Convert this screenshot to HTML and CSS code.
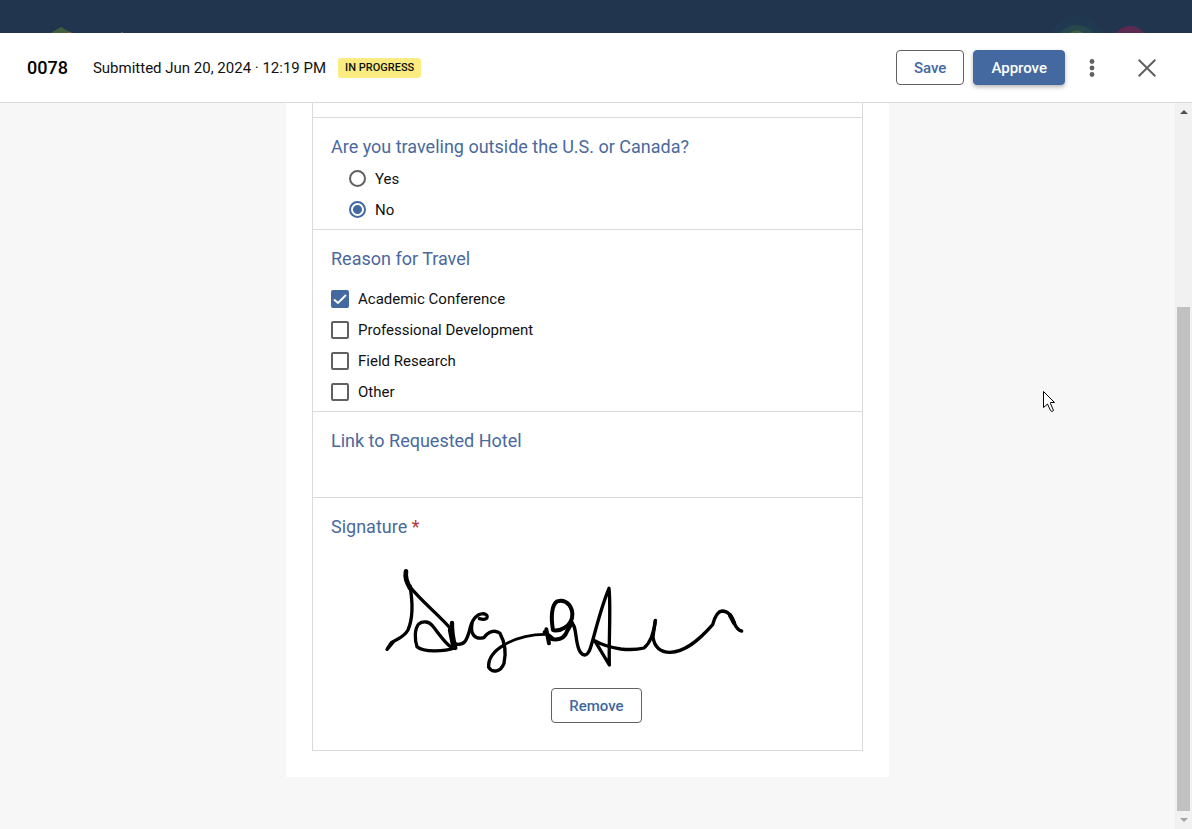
FILE: index.html
```html
<!DOCTYPE html>
<html lang="en">
<head>
    <meta charset="UTF-8">
    <meta name="viewport" content="width=device-width, initial-scale=1.0">
    <title>Submission 0078</title>
    <link rel="stylesheet" href="styles.css">
</head>
<body>
    <div class="topbar">
        <svg class="topbar-logo" width="80" height="33" viewBox="0 0 80 33" aria-hidden="true">
            <path d="M9 34 L21 27 L33 34 Z" fill="#415c3c"/>
            <path d="M27 33 L29 31.5 L32 33 Z" fill="#8a5a2c"/>
            <path d="M82 33 v-1" stroke="#8391a5"/>
        </svg>
        <svg class="topbar-user" width="100" height="33" viewBox="0 0 100 33" aria-hidden="true">
            <circle cx="25" cy="45" r="29" fill="#213851"/>
            <circle cx="25" cy="47" r="22" fill="#26474b"/>
            <path d="M18 34 Q25 29 31 34" fill="none" stroke="#45603f" stroke-width="2"/>
            <circle cx="78" cy="43" r="17" fill="#5c2950"/>
        </svg>
    </div>

    <header class="header">
        <h1 class="header-id">0078</h1>
        <span class="header-date">Submitted Jun 20, 2024 · 12:19 PM</span>
        <span class="badge">IN PROGRESS</span>
        <div class="actions">
            <button type="button" class="btn">Save</button>
            <button type="button" class="btn btn-primary">Approve</button>
            <button type="button" class="icon-btn icon-more" aria-label="More options">
                <svg width="6" height="18" viewBox="0 0 6 18" fill="#616161">
                    <circle cx="3" cy="2.5" r="2.4"/>
                    <circle cx="3" cy="9" r="2.4"/>
                    <circle cx="3" cy="15.5" r="2.4"/>
                </svg>
            </button>
            <button type="button" class="icon-btn" aria-label="Close">
                <svg width="18" height="18" viewBox="0 0 18 18" stroke="#616161" stroke-width="2">
                    <path d="M0.7 0.7 L17.3 17.3 M17.3 0.7 L0.7 17.3"/>
                </svg>
            </button>
        </div>
    </header>

    <div class="content">
        <main class="main">
            <form class="card">
                <div class="fields">
                    <div class="field-end"></div>

                    <fieldset class="field">
                        <legend class="label">Are you traveling outside the U.S. or Canada?</legend>
                        <div class="options options-radio">
                            <label class="option"><input type="radio" name="outside">Yes</label>
                            <label class="option"><input type="radio" name="outside" checked>No</label>
                        </div>
                    </fieldset>

                    <fieldset class="field">
                        <legend class="label">Reason for Travel</legend>
                        <div class="options options-check">
                            <label class="option"><span class="check"><input type="checkbox" checked><svg viewBox="0 0 18 18"><path d="M3 9.5 L7 13 L15 5"/></svg></span>Academic Conference</label>
                            <label class="option"><span class="check"><input type="checkbox"></span>Professional Development</label>
                            <label class="option"><span class="check"><input type="checkbox"></span>Field Research</label>
                            <label class="option"><span class="check"><input type="checkbox"></span>Other</label>
                        </div>
                    </fieldset>

                    <div class="field">
                        <label class="label" for="hotel">Link to Requested Hotel</label>
                        <input class="text-input" type="url" id="hotel">
                    </div>

                    <div class="field">
                        <div class="label">Signature <span class="required">*</span></div>
                        <div class="signature">
                            <svg class="signature-pad" viewBox="-63 24 1485 375" role="img" aria-label="Signature">
                                <path stroke-width="14" d="M108 64 C104 84 111 98 120 114"/>
                                <path d="M120 108 C129 160 129 205 114 240 C100 264 82 266 64 278 L51 298 L70 276"/>
                                <path d="M118 108 C150 150 208 196 242 236"/>
                                <path d="M254 294 C222 305 160 307 141 290 C134 268 133 238 146 222 C160 211 178 215 188 228 C206 250 222 276 244 292"/>
                                <path stroke-width="13" d="M246 219 C245 245 250 270 256 294 M240 240 L250 290"/>
                                <path d="M256 282 C284 288 290 270 298 244 C304 214 316 192 340 191 C360 194 354 214 328 206"/>
                                <path d="M306 220 C300 252 314 270 342 263 C354 244 376 238 390 250 C402 272 410 304 402 340 C392 366 368 370 356 352 C354 324 376 300 404 284"/>
                                <path stroke-width="8" d="M404 284 C440 262 490 252 530 253"/>
                                <path stroke-width="12" d="M529 238 L537 280 M524 246 L546 264"/>
                                <path stroke-width="12" d="M549 240 C542 200 545 164 562 154 C590 146 612 172 606 204 C600 228 574 244 551 241"/>
                                <path stroke-width="12" d="M540 266 C564 272 584 266 592 242 L606 218"/>
                                <path d="M604 218 C622 226 614 286 632 308 C642 320 654 318 662 292 C676 246 692 174 717 115 C723 170 716 270 718 345 L676 275"/>
                                <path d="M674 272 C694 284 720 292 752 297 C780 300 806 298 822 294 C844 276 852 246 856 212"/>
                                <path d="M856 211 C854 230 850 248 849 262 C854 294 872 307 900 307 C944 306 984 274 1028 224 C1034 202 1042 184 1056 183 C1074 184 1088 198 1091 216 C1098 232 1104 242 1115 243"/>
                                <path stroke-width="13" d="M1080 196 L1092 218"/>
                            </svg>
                            <button type="button" class="btn btn-remove">Remove</button>
                        </div>
                    </div>
                </div>
            </form>
        </main>

        <div class="scrollbar" aria-hidden="true">
            <span class="arrow arrow-up"></span>
            <div class="rail"><div class="thumb"></div></div>
            <span class="arrow arrow-down"></span>
        </div>
    </div>

    <svg class="cursor" width="13" height="22" viewBox="0 0 13 22" aria-hidden="true">
        <path d="M0.5 0.5 V16.5 L4.5 13 L7.5 19.5 Q9 21.5 10.5 19.5 L7.5 12.5 V11.5 H11.5 Z" fill="#fff" stroke="#000"/>
    </svg>
</body>
</html>
```

FILE: styles.css
```css
* {
    box-sizing: border-box;
}

body {
    margin: 0;
    height: 100vh;
    display: flex;
    flex-direction: column;
    overflow: hidden;
    font-family: Roboto, Arial, sans-serif;
    font-size: 15px;
    color: #111;
    background-color: #f7f7f7;
}

/* Top bar and header */
.topbar {
    display: flex;
    justify-content: space-between;
    flex: none;
    height: 33px;
    padding: 0 40px;
    background-color: #22354f;
}

.topbar-logo {
    overflow: visible;
}

.header {
    display: flex;
    align-items: center;
    flex: none;
    height: 70px;
    padding: 0 36px 0 27px;
    background-color: #fff;
    border-bottom: 1px solid #dadada;
}

.header-id {
    margin: 0 25px 0 0;
    font-size: 18px;
    font-weight: 500;
    color: #000;
}

.badge {
    margin-left: 12px;
    padding: 0 7px;
    border-radius: 3px;
    font-size: 11px;
    font-weight: 500;
    line-height: 20px;
    background-color: #faec80;
}

.actions {
    display: flex;
    align-items: center;
    margin-left: auto;
}

.btn {
    height: 35px;
    padding: 0 17px;
    border: 1px solid #616161;
    border-radius: 4px;
    font-family: inherit;
    font-size: 15px;
    font-weight: 500;
    color: #4369a0;
    background-color: #fff;
}

.btn-primary {
    margin-left: 9px;
    border-color: #4369a0;
    color: #fff;
    background-color: #4369a0;
    box-shadow: 0 2px 4px rgba(0, 0, 0, 0.3);
}

.icon-btn {
    display: flex;
    padding: 0;
    border: none;
    background: none;
}

.icon-more {
    margin: 0 43px 0 24px;
}

/* Form */
.content {
    display: flex;
    flex: 1;
    min-height: 0;
}

.main {
    flex: 1;
    overflow: hidden;
}

.card {
    max-width: 603px;
    margin: 0 auto;
    padding: 0 26px 26px;
    background-color: #fff;
}

.fields {
    border: 1px solid #dadada;
    border-top: none;
}

.field-end {
    height: 14px;
}

.field {
    min-width: 0;
    margin: 0;
    padding: 17px 18px 4px;
    border: none;
    border-top: 1px solid #dadada;
}

.label {
    display: block;
    float: left;
    width: 100%;
    padding: 0;
    font-size: 18px;
    line-height: 24px;
    color: #4a699c;
}

.required {
    color: #b3353a;
}

.options {
    clear: both;
}

.options-radio {
    padding: 4px 0 0 18px;
}

.options-check {
    padding-top: 12px;
}

.option {
    display: flex;
    align-items: center;
    gap: 9px;
    height: 31px;
}

.option input {
    appearance: none;
    flex: none;
    width: 18px;
    height: 18px;
    margin: 0;
    border: 2px solid #616161;
    background-color: #fff;
}

.option input[type="radio"] {
    width: 17px;
    height: 17px;
    border-radius: 50%;
}

.option input[type="radio"]:checked {
    border-color: #4369a0;
    background: radial-gradient(circle, #4369a0 4px, #fff 5px);
}

.option input[type="checkbox"] {
    display: block;
    border-radius: 2px;
}

.option input[type="checkbox"]:checked {
    border-color: #4369a0;
    background-color: #4369a0;
}

.check {
    display: grid;
}

.check > * {
    grid-area: 1 / 1;
}

.check svg {
    z-index: 1;
    width: 18px;
    height: 18px;
    fill: none;
    stroke: #fff;
    stroke-width: 2;
    pointer-events: none;
}

.text-input {
    display: block;
    clear: both;
    width: 100%;
    height: 40px;
    padding: 0;
    border: none;
    font: inherit;
    background: none;
}

.signature {
    display: flex;
    clear: both;
    flex-direction: column;
    align-items: center;
    padding: 19px 0 23px 18px;
}

.signature-pad {
    width: 100%;
    fill: none;
    stroke: #000;
    stroke-width: 10;
    stroke-linecap: round;
    stroke-linejoin: round;
}

.btn-remove {
    margin-top: 5px;
}

/* Scrollbar */
.scrollbar {
    display: flex;
    flex-direction: column;
    width: 17px;
    background-color: #f1f1f1;
}

.arrow {
    display: flex;
    align-items: center;
    justify-content: center;
    height: 18px;
}

.arrow::before {
    content: "";
    border: 4px solid transparent;
}

.arrow-up::before {
    border-top: none;
    border-bottom-color: #505050;
}

.arrow-down::before {
    border-bottom: none;
    border-top-color: #a3a3a3;
}

.rail {
    display: flex;
    flex: 1;
    flex-direction: column;
    justify-content: flex-end;
    padding: 0 2px;
}

.thumb {
    height: 73%;
    background-color: #c1c1c1;
}

.cursor {
    position: absolute;
    left: 1043px;
    top: 391px;
}
```
